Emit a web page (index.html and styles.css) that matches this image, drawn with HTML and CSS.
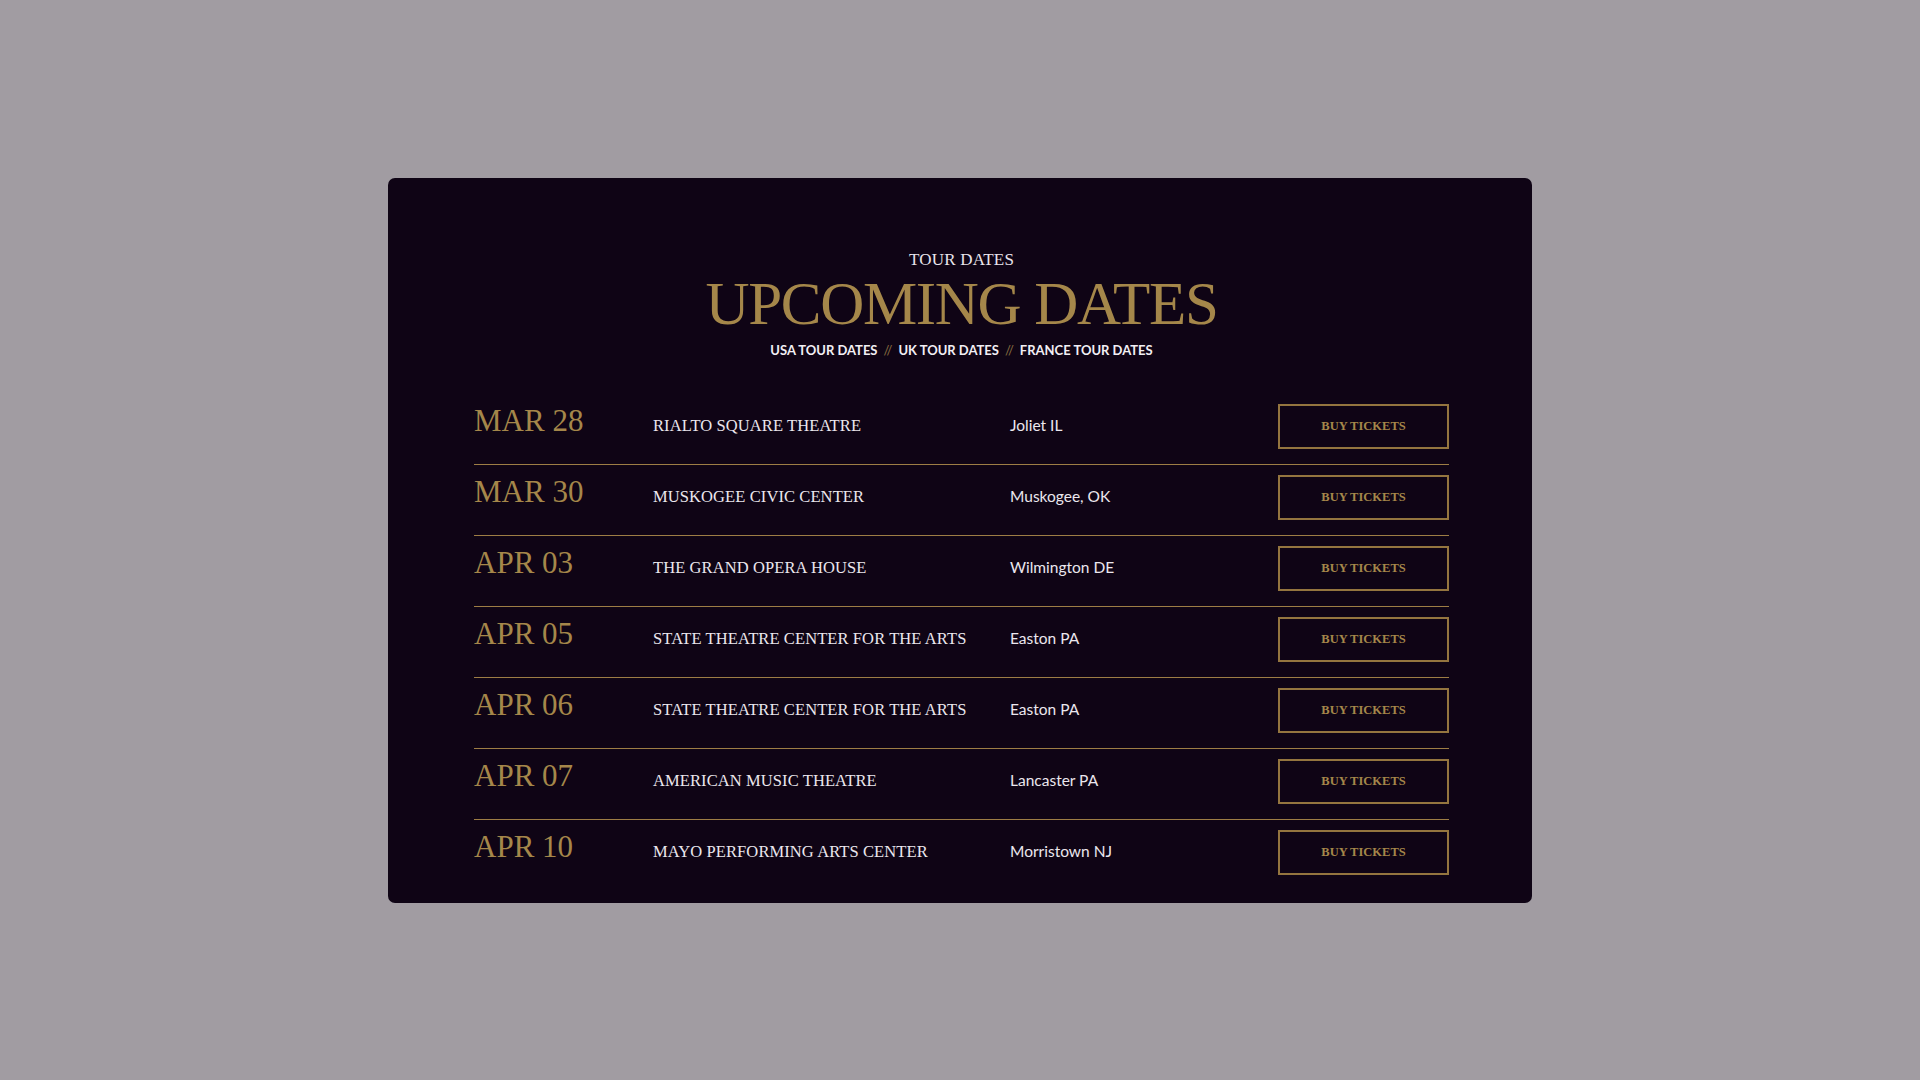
FILE: index.html
```html
<!DOCTYPE html>
<html lang="en">
<head>
<meta charset="utf-8">
<title>Upcoming Dates</title>
<link rel="stylesheet" href="styles.css">
</head>
<body>
<main class="card">
  <header class="head">
    <p class="eyebrow">TOUR DATES</p>
    <h1 class="title">UPCOMING DATES</h1>
    <nav class="tabs">
      <a href="#">USA TOUR DATES</a><span class="sep">//</span><a href="#">UK TOUR DATES</a><span class="sep">//</span><a href="#">FRANCE TOUR DATES</a>
    </nav>
  </header>
  <ul class="list">
    <li class="row"><span class="date">MAR 28</span><span class="venue">RIALTO SQUARE THEATRE</span><span class="city">Joliet IL</span><a class="btn" href="#">BUY TICKETS</a></li>
    <li class="row"><span class="date">MAR 30</span><span class="venue">MUSKOGEE CIVIC CENTER</span><span class="city">Muskogee, OK</span><a class="btn" href="#">BUY TICKETS</a></li>
    <li class="row"><span class="date">APR 03</span><span class="venue">THE GRAND OPERA HOUSE</span><span class="city">Wilmington DE</span><a class="btn" href="#">BUY TICKETS</a></li>
    <li class="row"><span class="date">APR 05</span><span class="venue">STATE THEATRE CENTER FOR THE ARTS</span><span class="city">Easton PA</span><a class="btn" href="#">BUY TICKETS</a></li>
    <li class="row"><span class="date">APR 06</span><span class="venue">STATE THEATRE CENTER FOR THE ARTS</span><span class="city">Easton PA</span><a class="btn" href="#">BUY TICKETS</a></li>
    <li class="row"><span class="date">APR 07</span><span class="venue">AMERICAN MUSIC THEATRE</span><span class="city">Lancaster PA</span><a class="btn" href="#">BUY TICKETS</a></li>
    <li class="row"><span class="date">APR 10</span><span class="venue">MAYO PERFORMING ARTS CENTER</span><span class="city">Morristown NJ</span><a class="btn" href="#">BUY TICKETS</a></li>
  </ul>
</main>
</body>
</html>
```
FILE: styles.css
```css
* { box-sizing: border-box; }
html, body { margin: 0; padding: 0; }
body {
  background: #a19ca2;
  min-height: 1080px;
  padding-top: 178px;
}
.card {
  width: 1144px;
  margin: 0 auto;
  background: #0f0415;
  border-radius: 7px;
  padding: 72px 83px 13px 86px;
}
.head {
  text-align: center;
  margin-bottom: 36px;
}
.eyebrow {
  margin: 0;
  font-family: "Liberation Serif", "Times New Roman", serif;
  font-size: 17px;
  line-height: 20px;
  color: #e9e5ec;
  letter-spacing: 0.2px;
}
.title {
  margin: 3px 0 0;
  font-family: "Liberation Serif", "Times New Roman", serif;
  font-weight: normal;
  font-size: 61px;
  line-height: 62px;
  letter-spacing: -1.3px;
  color: #a5874a;
}
.tabs {
  margin-top: 7px;
  font-family: Lato, "Liberation Sans", sans-serif;
  font-size: 13px;
  line-height: 16px;
  font-weight: 700;
}
.tabs a {
  color: #f2eff4;
  text-decoration: none;
}
.sep {
  color: #8a6f40;
  font-weight: 400;
  margin: 0 6px;
}
.list {
  list-style: none;
  margin: 0;
  padding: 0;
}
.row {
  display: grid;
  grid-template-columns: 179px 357px 1fr 171px;
  align-items: center;
  padding: 10px 0 15px;
  border-bottom: 1px solid #9d7d45;
}
.row:last-child { border-bottom: none; }
.date {
  font-family: "Liberation Serif", "Times New Roman", serif;
  font-size: 31px;
  line-height: 32px;
  color: #a5874a;
  margin-bottom: 12px;
}
.venue {
  font-family: "Liberation Serif", "Times New Roman", serif;
  font-size: 16.5px;
  line-height: 17px;
  color: #ebe7ee;
  letter-spacing: 0.1px;
  margin-bottom: 2px;
}
.city {
  font-family: Lato, "Liberation Sans", sans-serif;
  font-size: 15.5px;
  line-height: 16px;
  color: #ebe7ee;
  margin-bottom: 3px;
}
.btn {
  display: flex;
  align-items: center;
  justify-content: center;
  height: 45px;
  border: 2px solid #94753f;
  font-family: "Liberation Serif", "Times New Roman", serif;
  font-weight: 700;
  font-size: 12.5px;
  color: #a5874a;
  text-decoration: none;
  letter-spacing: 0;
}
```
